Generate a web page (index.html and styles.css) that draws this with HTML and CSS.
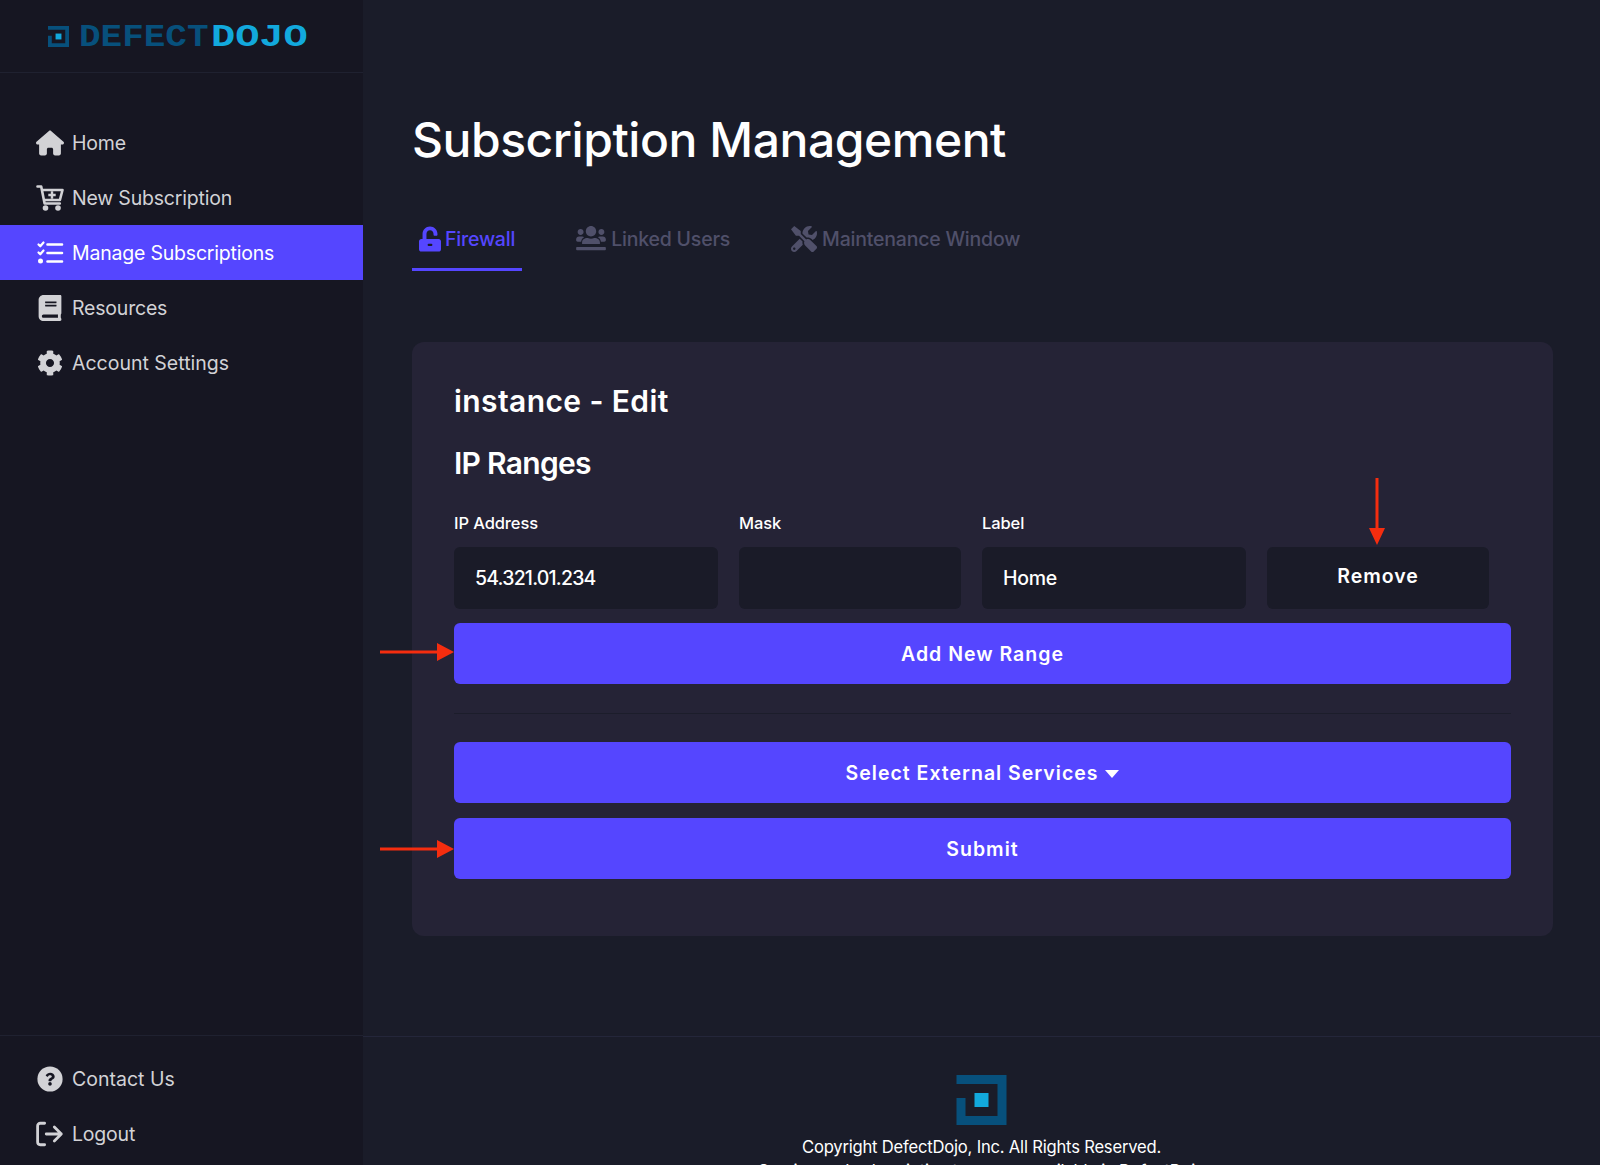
FILE: index.html
```html
<!DOCTYPE html>
<html lang="en">
<head>
<meta charset="UTF-8">
<meta name="viewport" content="width=device-width, initial-scale=1.0">
<title>Subscription Management</title>
<link rel="stylesheet" href="styles.css">
</head>
<body>
  <div class="app">
    <aside class="sidebar">
      <div class="brand">
        <svg class="brand-mark" viewBox="0 0 50 50"><path fill="#07507c" d="M0 0h50v50H0V23h9v18h32V9H0z"/><rect fill="#12a9dd" x="18" y="18" width="14" height="14"/></svg>
        <span class="brand-word brand-dim">DEFECT</span><span class="brand-word brand-lit">DOJO</span>
      </div>

      <nav class="nav nav-main">
        <a class="nav-item">
          <svg class="nav-icon" viewBox="0 0 576 512"><path fill="currentColor" d="M575.800 255.500c0 18-15 32.100-32 32.100h-32l.7 160.200c0 2.700-.2 5.400-.5 8.100V472c0 22.100-17.900 40-40 40H456c-1.100 0-2.200 0-3.300-.1c-1.400 .1-2.800 .1-4.200 .1H416 392c-22.100 0-40-17.900-40-40V448 384c0-17.700-14.300-32-32-32H256c-17.700 0-32 14.300-32 32v64 24c0 22.100-17.900 40-40 40H160 128.100c-1.500 0-3-.1-4.500-.2c-1.200 .1-2.400 .2-3.600 .2H104c-22.100 0-40-17.900-40-40V360c0-.9 0-1.900 .1-2.800V287.600H32c-18 0-32-14-32-32.100c0-9 3-17 10-24L266.400 8c7-7 15-8 22-8s15 2 21 7L564.800 231.500c8 7 12 15 11 24z"/></svg>
          Home
        </a>
        <a class="nav-item">
          <svg class="nav-icon" viewBox="0 0 28 26"><path fill="none" stroke="currentColor" stroke-width="2.600" stroke-linejoin="round" stroke-linecap="round" d="M1.500 1.500h3.700l3.400 17h15.200M6 5h20.500l-2.600 10H8"/><path fill="none" stroke="currentColor" stroke-width="2.400" d="M16 6.300v7.400M12.300 10h7.400"/><circle fill="currentColor" cx="9.500" cy="23" r="2.800"/><circle fill="currentColor" cx="22" cy="23" r="2.800"/></svg>
          New Subscription
        </a>
        <a class="nav-item is-active">
          <svg class="nav-icon" viewBox="0 0 28 24"><path fill="none" stroke="currentColor" stroke-width="2.200" stroke-linecap="round" stroke-linejoin="round" d="M2.500 3.500l1.800 1.800L7.500 1.500M2.500 11.500l1.800 1.800 3.200-3.800"/><circle fill="currentColor" cx="4.500" cy="20" r="2.500"/><path fill="none" stroke="currentColor" stroke-width="2.600" stroke-linecap="round" d="M11.500 3.500H26M11.500 12H26M11.500 20.500H26"/></svg>
          Manage Subscriptions
        </a>
        <a class="nav-item">
          <svg class="nav-icon" viewBox="0 0 448 512"><path fill="currentColor" d="M448 360V24c0-13.300-10.700-24-24-24H96C43 0 0 43 0 96v320c0 53 43 96 96 96h328c13.300 0 24-10.700 24-24v-16c0-7.500-3.500-14.300-8.900-18.700-4.200-15.400-4.200-59.300 0-74.700 5.400-4.300 8.900-11.100 8.900-18.600zM128 134c0-3.300 2.700-6 6-6h212c3.300 0 6 2.700 6 6v20c0 3.300-2.700 6-6 6H134c-3.300 0-6-2.700-6-6v-20zm0 64c0-3.300 2.700-6 6-6h212c3.300 0 6 2.700 6 6v20c0 3.300-2.700 6-6 6H134c-3.300 0-6-2.700-6-6v-20zm253.400 250H96c-17.700 0-32-14.300-32-32 0-17.600 14.400-32 32-32h285.400c-1.900 17.100-1.900 46.900 0 64z"/></svg>
          Resources
        </a>
        <a class="nav-item nav-item-wide">
          <svg class="nav-icon" viewBox="0 0 512 512"><path fill="currentColor" d="M487.400 315.700l-42.600-24.600c4.300-23.200 4.300-47 0-70.200l42.600-24.600c4.900-2.800 7.100-8.600 5.500-14-11.100-35.600-30-67.800-54.700-94.600-3.800-4.100-10-5.100-14.800-2.300L380.800 110c-17.900-15.400-38.500-27.300-60.800-35.100V25.800c0-5.600-3.900-10.500-9.400-11.700-36.700-8.200-74.300-7.800-109.200 0-5.500 1.200-9.400 6.100-9.400 11.700V75c-22.200 7.900-42.800 19.800-60.800 35.100L88.700 85.500c-4.900-2.800-11-1.900-14.800 2.300-24.700 26.700-43.600 58.900-54.700 94.600-1.700 5.400.6 11.200 5.500 14L67.300 221c-4.300 23.200-4.300 47 0 70.200l-42.600 24.600c-4.900 2.800-7.100 8.600-5.500 14 11.100 35.600 30 67.800 54.700 94.600 3.800 4.100 10 5.100 14.800 2.300l42.600-24.600c17.900 15.400 38.500 27.300 60.800 35.100v49.200c0 5.600 3.900 10.500 9.400 11.700 36.700 8.200 74.300 7.800 109.200 0 5.500-1.200 9.400-6.100 9.400-11.700v-49.200c22.200-7.900 42.800-19.800 60.800-35.100l42.600 24.600c4.900 2.800 11 1.900 14.800-2.300 24.700-26.700 43.600-58.900 54.700-94.600 1.500-5.500-.7-11.300-5.600-14.100zM256 336c-44.100 0-80-35.900-80-80s35.900-80 80-80 80 35.900 80 80-35.900 80-80 80z"/></svg>
          Account Settings
        </a>
      </nav>

      <nav class="nav nav-bottom">
        <a class="nav-item nav-item-wide">
          <svg class="nav-icon" viewBox="0 0 512 512"><circle fill="currentColor" cx="256" cy="256" r="248"/><path fill="#161622" transform="translate(64 64) scale(.75)" d="M262.655 90c-54.497 0-89.255 22.957-116.549 63.758-3.536 5.286-2.353 12.415 2.715 16.258l34.699 26.310c5.205 3.947 12.621 3.008 16.665-2.122 17.864-22.658 30.113-35.797 57.303-35.797 20.429 0 45.698 13.148 45.698 32.958 0 14.976-12.363 22.667-32.534 33.976C247.128 238.528 216 254.941 216 296v4c0 6.627 5.373 12 12 12h56c6.627 0 12-5.373 12-12v-1.333c0-28.462 83.186-29.647 83.186-106.667 0-58.002-60.165-102-116.531-102zM256 338c-25.365 0-46 20.635-46 46 0 25.364 20.635 46 46 46s46-20.636 46-46c0-25.365-20.635-46-46-46z"/></svg>
          Contact Us
        </a>
        <a class="nav-item">
          <svg class="nav-icon" viewBox="0 0 26 24"><path fill="none" stroke="currentColor" stroke-width="2.600" stroke-linecap="round" stroke-linejoin="round" d="M8 2H4a2.500 2.500 0 0 0-2.500 2.500v15A2.500 2.500 0 0 0 4 22h4M9.500 12h14M17 5.500l6.500 6.500-6.500 6.500"/></svg>
          Logout
        </a>
      </nav>
    </aside>

    <div class="main">
      <main class="content">
        <h1 class="page-title">Subscription Management</h1>

        <div class="tabs">
          <a class="tab is-active">
            <svg class="tab-icon tab-icon-lock" viewBox="0 0 448 512"><path fill="currentColor" d="M400 256H152V152.900c0-39.600 31.700-72.500 71.300-72.900 40-.4 72.700 32.100 72.700 72v16c0 13.300 10.700 24 24 24h32c13.300 0 24-10.700 24-24v-16C376 68 307.500-.3 223.500 0 139.500.3 72 69.500 72 153.500V256H48c-26.500 0-48 21.500-48 48v160c0 26.500 21.500 48 48 48h352c26.500 0 48-21.500 48-48V304c0-26.500-21.500-48-48-48z"/><rect fill="#1a1c29" x="176" y="352" width="96" height="44" rx="20"/></svg>
            Firewall
          </a>
          <a class="tab">
            <svg class="tab-icon tab-icon-users" viewBox="0 0 640 560"><path fill="currentColor" d="M96 192c35.300 0 64-28.700 64-64s-28.700-64-64-64-64 28.700-64 64 28.700 64 64 64zm448 0c35.300 0 64-28.700 64-64s-28.700-64-64-64-64 28.700-64 64 28.700 64 64 64zm32 32h-64c-17.600 0-33.500 7.100-45.100 18.600 40.300 22.100 60 52 66 97.400h75c17.700 0 32-14.300 32-32v-20c0-35.300-28.700-64-64-64zm-256 0c61.900 0 112-50.100 112-112S381.900 0 320 0 208 50.100 208 112s50.100 112 112 112zm76.800 32h-8.300c-20.800 10-43.900 16-68.500 16s-47.600-6-68.500-16h-8.300C179.600 256 128 290 128 350v40h384v-40c0-60-51.600-94-115.200-94zm-223.700-13.400C161.500 231.100 145.600 224 128 224H64c-35.300 0-64 28.700-64 64v20c0 17.700 14.300 32 32 32h75c6-45.400 25.700-75.300 66.100-97.400z"/><rect fill="currentColor" x="0" y="450" width="640" height="70" rx="20"/></svg>
            Linked Users
          </a>
          <a class="tab">
            <svg class="tab-icon" viewBox="0 0 512 512"><path fill="currentColor" d="M501.100 395.700L384 278.600c-23.100-23.100-57.600-27.600-85.400-13.900L192 158.100V96L64 0 0 64l96 128h62.100l106.600 106.600c-13.600 27.800-9.200 62.300 13.900 85.400l117.100 117.100c14.600 14.600 38.200 14.600 52.700 0l52.700-52.700c14.500-14.600 14.500-38.200 0-52.700zM331.700 225c28.300 0 54.900 11 74.900 31l19.400 19.400c15.800-6.900 30.800-16.500 43.800-29.500 37.100-37.100 49.700-89.300 37.900-136.700-2.200-9-13.500-12.100-20.100-5.500l-74.400 74.400-67.900-11.300L334 98.900l74.400-74.400c6.600-6.600 3.400-17.900-5.700-20.200-47.400-11.700-99.600.9-136.600 37.900-28.500 28.500-41.900 66.100-41.200 103.600l82.100 82.100c8.100-1.900 16.500-2.900 24.700-2.900zm-103.900 82l-56.700-56.700L18.700 402.800c-25 25-25 65.500 0 90.500s65.500 25 90.500 0l123.600-123.600c-7.600-19.900-9.900-41.600-5-62.700zM64 472c-13.200 0-24-10.800-24-24 0-13.300 10.700-24 24-24s24 10.700 24 24c0 13.200-10.700 24-24 24z"/></svg>
            Maintenance Window
          </a>
        </div>

        <section class="card">
          <h2 class="card-title">instance - Edit</h2>
          <h3 class="card-subtitle">IP Ranges</h3>

          <form class="range-form">
            <div class="range-row">
              <div class="field">
                <label class="field-label">IP Address</label>
                <div class="field-input field-input-ip">54.321.01.234</div>
              </div>
              <div class="field">
                <label class="field-label">Mask</label>
                <div class="field-input"></div>
              </div>
              <div class="field">
                <label class="field-label">Label</label>
                <div class="field-input">Home</div>
              </div>
              <button type="button" class="btn btn-dark">Remove</button>
            </div>

            <button type="button" class="btn btn-primary">Add New Range</button>
            <hr class="divider">
            <button type="button" class="btn btn-primary">Select External Services <span class="caret"></span></button>
            <button type="button" class="btn btn-primary btn-submit">Submit</button>
          </form>

          <!-- red annotation arrows on top of the screenshot -->
          <svg class="arrow arrow-add" viewBox="0 0 74 18"><path fill="#f52d0f" d="M0 7.500h57V0l17 9-17 9v-7.500H0z"/></svg>
          <svg class="arrow arrow-submit" viewBox="0 0 74 18"><path fill="#f52d0f" d="M0 7.500h57V0l17 9-17 9v-7.500H0z"/></svg>
          <svg class="arrow arrow-remove" viewBox="0 0 16 67"><path fill="#f52d0f" d="M6.500 0h3v50H16l-8 17-8-17h6.500z"/></svg>
        </section>
      </main>

      <footer class="footer">
        <svg class="footer-logo" viewBox="0 0 50 50"><path fill="#07507c" d="M0 0h50v50H0V23h9v18h32V9H0z"/><rect fill="#12a9dd" x="18" y="18" width="14" height="14"/></svg>
        <p class="footer-line">Copyright DefectDojo, Inc. All Rights Reserved.</p>
        <p class="footer-line">Service and subscription terms are available in DefectDojo</p>
      </footer>
    </div>
  </div>
</body>
</html>
```

FILE: styles.css
```css
* {
  box-sizing: border-box;
}

body {
  margin: 0;
  background-color: #1a1c29;
  color: #fff;
  font-family: Inter, "Noto Sans", sans-serif;
}

.app {
  display: flex;
  height: 100vh;
  overflow: hidden;
}

/* Sidebar */
.sidebar {
  display: flex;
  flex-direction: column;
  flex: 0 0 363px;
  background-color: #161622;
}

.brand {
  display: flex;
  align-items: center;
  height: 73px;
  padding-left: 48px;
  border-bottom: 1px solid #1f2130;
  font-family: "Liberation Mono", monospace;
  font-size: 31px;
  font-weight: 700;
  line-height: 1;
}

.brand-mark {
  width: 21px;
  height: 21px;
  margin-right: 10px;
}

/* the wordmark is wide and square, so stretch the mono font */
.brand-word {
  display: inline-block;
  padding-top: 3px;
  transform-origin: left center;
}

.brand-dim {
  width: 132px;
  color: #07507c;
  transform: scaleX(1.16);
}

.brand-lit {
  width: 97px;
  color: #12a9dd;
  transform: scaleX(1.3);
}

.nav-main {
  flex: 1;
  padding-top: 42px;
}

.nav-bottom {
  height: 130px;
  padding-top: 15px;
  border-top: 1px solid #1f2130;
}

.nav-item {
  display: flex;
  align-items: center;
  gap: 8px;
  height: 55px;
  padding-left: 36px;
  color: #d2d2d6;
  font-size: 19.5px;
  letter-spacing: -0.2px;
}

.nav-item-wide {
  letter-spacing: 0;
}

.nav-item.is-active {
  background-color: #5546ff;
  color: #fff;
}

.nav-icon {
  flex: 0 0 28px;
  width: 28px;
  height: 26px;
}

/* Main column */
.main {
  flex: 1;
  min-width: 0;
}

.content {
  padding: 0 47px 0 49px;
}

.page-title {
  margin: 0;
  padding-top: 108px;
  font-size: 48px;
  font-weight: 500;
  line-height: 64px;
  letter-spacing: -0.45px;
}

.tabs {
  display: flex;
  gap: 47px;
  margin-top: 37px;
}

.tab {
  display: flex;
  align-items: center;
  gap: 5px;
  height: 62px;
  padding: 0 7px;
  border-bottom: 3px solid transparent;
  color: #50506a;
  font-size: 19.5px;
  font-weight: 500;
  letter-spacing: -0.2px;
}

.tab.is-active {
  border-bottom-color: #5546ff;
  color: #5546ff;
}

.tab-icon {
  width: 26px;
  height: 26px;
}

.tab-icon-lock {
  width: 22px;
  margin-right: -1px;
}

.tab-icon-users {
  width: 30px;
}

.card {
  position: relative;
  height: 594px;
  margin-top: 71px;
  padding: 38px 42px 0;
  border-radius: 12px;
  background-color: #252336;
}

.card-title,
.card-subtitle {
  margin: 0;
  font-size: 30px;
  font-weight: 600;
  line-height: 42px;
}

.card-title {
  letter-spacing: 0.4px;
}

.card-subtitle {
  margin-top: 20px;
  letter-spacing: -0.7px;
}

.range-form {
  margin-top: 29px;
}

.range-row {
  display: grid;
  grid-template-columns: 264px 222px 264px 222px;
  column-gap: 21px;
  align-items: end;
  margin-bottom: 14px;
}

.field-label {
  display: block;
  margin-bottom: 14px;
  font-size: 16.5px;
  font-weight: 500;
  line-height: 20px;
  letter-spacing: -0.1px;
}

.field-input {
  height: 62px;
  padding: 0 21px;
  border-radius: 6px;
  background-color: #1a1b28;
  font-size: 19.5px;
  font-weight: 500;
  line-height: 62px;
  letter-spacing: -0.3px;
}

.field-input-ip {
  letter-spacing: -0.8px;
}

.btn {
  display: block;
  width: 100%;
  height: 62px;
  border: 0;
  border-radius: 6px;
  color: #fff;
  font-family: inherit;
  font-size: 19.5px;
  font-weight: 600;
  letter-spacing: 1px;
}

.btn-dark {
  padding-bottom: 6px;
  background-color: #1a1b28;
}

.btn-primary {
  height: 61px;
  background-color: #5546ff;
}

.btn-submit {
  margin-top: 15px;
}

.caret {
  display: inline-block;
  margin-left: 1px;
  border-top: 8px solid #fff;
  border-left: 7px solid transparent;
  border-right: 7px solid transparent;
  vertical-align: 2px;
}

.divider {
  height: 1px;
  margin: 29px 0 28px;
  border: 0;
  background-color: #1c1d2b;
}

.arrow {
  position: absolute;
}

.arrow-add,
.arrow-submit {
  left: -32px;
  width: 74px;
  height: 18px;
}

.arrow-add {
  top: 301px;
}

.arrow-submit {
  top: 498px;
}

.arrow-remove {
  top: 136px;
  left: 957px;
  width: 16px;
  height: 67px;
}

/* Footer */
.footer {
  margin-top: 100px;
  padding-top: 38px;
  border-top: 1px solid #24263a;
  text-align: center;
}

.footer-logo {
  display: block;
  width: 51px;
  height: 50px;
  margin: 0 auto 10px;
}

.footer-line {
  margin: 0;
  font-size: 16.6px;
  line-height: 24px;
  letter-spacing: -0.2px;
}
```
